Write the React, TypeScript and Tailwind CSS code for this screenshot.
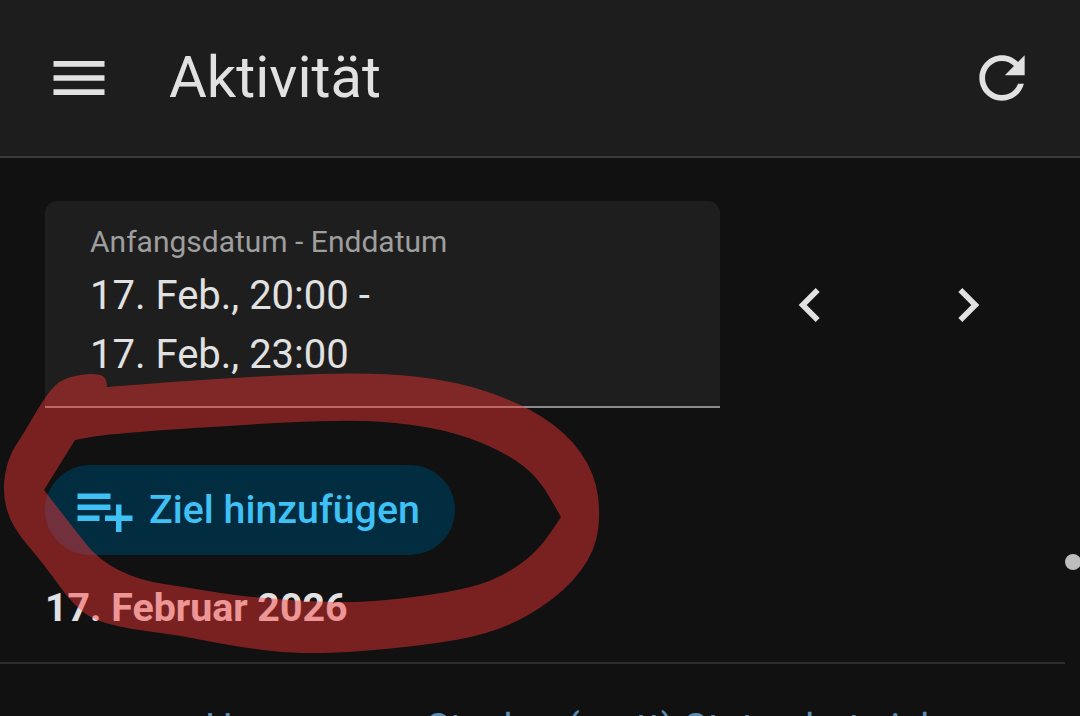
type Point = [number, number];

// hand drawn marker ring that was put on top of the screenshot
const outerRing: Point[] = [
  [106, 378], [107, 387], [107, 387], [237, 377], [375, 372], [455, 381], [518, 402], [566, 432], [595, 473],
  [601, 520], [591, 560], [555, 600], [496, 633], [415, 647], [308, 655], [237, 647], [178, 635], [115, 627],
  [79, 613], [43, 563], [12, 527], [2, 493], [8, 457], [24, 433], [43, 400], [59, 380], [83, 374], [99, 374],
];
const innerRing: Point[] = [
  [75, 440], [75, 440], [107, 434], [237, 425], [336, 420], [395, 422], [455, 432], [506, 453], [538, 477],
  [561, 517], [561, 517], [541, 547], [514, 570], [474, 588], [395, 600], [336, 603], [245, 597], [190, 588],
  [138, 580], [99, 560], [75, 530], [44, 490], [44, 490],
];

function smoothPath(points: Point[]) {
  const mid = (a: Point, b: Point) => `${(a[0] + b[0]) / 2} ${(a[1] + b[1]) / 2}`;
  let d = `M${mid(points[points.length - 1], points[0])}`;
  points.forEach((p, i) => {
    d += ` Q${p[0]} ${p[1]} ${mid(p, points[(i + 1) % points.length])}`;
  });
  return d + "Z";
}

function MaterialIcon({ d, className }: { d: string; className?: string }) {
  return (
    <svg viewBox="0 0 24 24" fill="currentColor" className={className}>
      <path d={d} />
    </svg>
  );
}

export default function App() {
  return (
    <div className="relative h-[716px] w-[1080px] overflow-hidden bg-[#111111] font-['Roboto',sans-serif] text-[#e1e1e1]">
      <header className="flex h-[158px] items-center justify-between border-b-2 border-[#3b3b3b] bg-[#1d1d1d] pr-[44px] pl-[45px]">
        <div className="flex items-center gap-[56px]">
          <MaterialIcon className="h-[68px] w-[68px]" d="M3 18h18v-2H3v2zm0-5h18v-2H3v2zm0-7v2h18V6H3z" />
          <h1 className="mb-[2px] text-[58px] leading-none font-normal">Aktivität</h1>
        </div>
        <MaterialIcon
          className="h-[68px] w-[68px]"
          d="M17.65 6.35C16.2 4.9 14.21 4 12 4c-4.42 0-7.99 3.58-7.99 8s3.57 8 7.99 8c3.73 0 6.84-2.55 7.73-6h-2.08c-.82 2.33-3.04 4-5.65 4-3.31 0-6-2.69-6-6s2.69-6 6-6c1.66 0 3.14.69 4.22 1.78L13 11h7V4l-2.35 2.35z"
        />
      </header>

      <main className="pt-[43px]">
        <div className="pl-[45px]">
          <div className="flex items-center">
            <div className="h-[207px] w-[675px] rounded-t-[12px] border-b-2 border-[#8c8c8c] bg-[#1e1e1e] pt-[21px] pl-[45px]">
              <div className="text-[30px] leading-[40px] text-[#9e9e9e]">Anfangsdatum - Enddatum</div>
              <div className="mt-[4px] text-[40px] leading-[59px]">
                17. Feb., 20:00 -<br />
                17. Feb., 23:00
              </div>
            </div>
            <div className="ml-[56px] flex gap-[90px]">
              <MaterialIcon className="h-[68px] w-[68px]" d="M15.41 7.41L14 6l-6 6 6 6 1.41-1.41L10.83 12z" />
              <MaterialIcon className="h-[68px] w-[68px]" d="M10 6L8.59 7.41 13.17 12l-4.58 4.59L10 18l6-6z" />
            </div>
          </div>

          <button className="mt-[57px] flex h-[90px] w-[410px] items-center gap-[11px] rounded-[45px] bg-[#022c3f] pl-[27px] text-[39.3px] font-medium text-[#3fc1f5]">
            <MaterialIcon
              className="h-[66px] w-[66px]"
              d="M14 10H2v2h12v-2zm0-4H2v2h12V6zm4 8v-4h-2v4h-4v2h4v4h2v-4h4v-2h-4zM2 16h8v-2H2v2z"
            />
            Ziel hinzufügen
          </button>

          <div className="mt-[31px] text-[39.3px] leading-[44px] font-bold">17. Februar 2026</div>
        </div>

        <div className="mt-[32px] mr-[15px] h-[2px] bg-[#2d2d2d]" />

        {/* only the tops of this line are on screen, wording below the cut is a best guess */}
        <div className="mt-[39px] pl-[205px] text-[39px] leading-[50px] whitespace-nowrap text-[#5b8db5]">
          Homeserver Stecker (matt) Status hat sich
        </div>
      </main>

      {/* overlay scrollbar thumb, mostly off the edge */}
      <div className="absolute top-[554px] left-[1065px] h-[16px] w-[16px] rounded-full bg-[#bdbdbd]" />

      <svg viewBox="0 0 1080 716" className="pointer-events-none absolute inset-0 h-[716px] w-[1080px]">
        <path d={smoothPath(outerRing) + " " + smoothPath(innerRing)} fill="rgb(255 54 54 / 0.44)" fillRule="evenodd" />
      </svg>
    </div>
  );
}
